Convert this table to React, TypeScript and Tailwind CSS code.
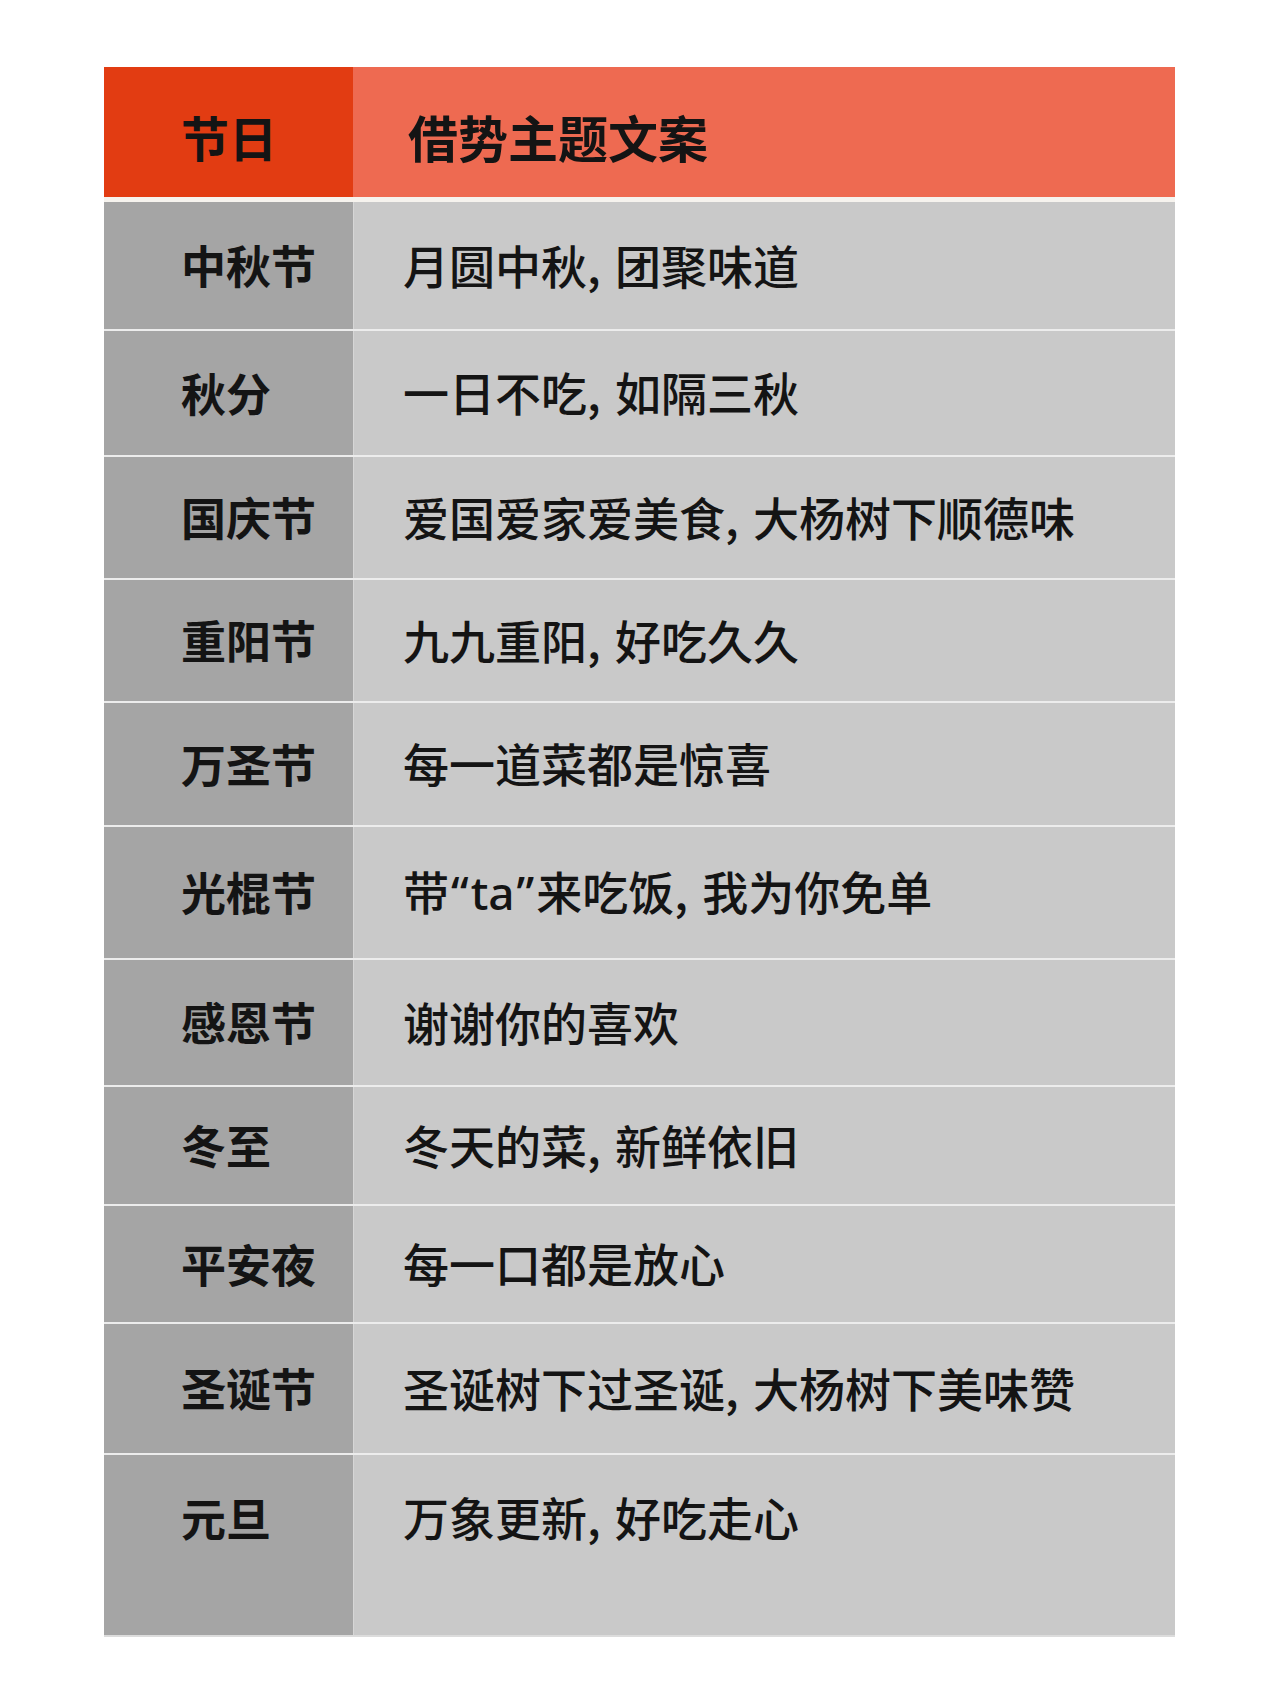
import type { ReactNode } from 'react';

const font = "font-['Noto_Sans_CJK_SC','Noto_Sans',sans-serif]";

function Comma() {
  return <span className="inline-block w-[28px]">,</span>;
}

function Q({ c }: { c: string }) {
  return <span className="font-['Noto_Sans','Noto_Sans_CJK_SC',sans-serif] mx-[2px]">{c}</span>;
}

function withCommas(s: string): ReactNode {
  const parts = s.split('，');
  return parts.map((p, i) => (
    <span key={i}>
      {p}
      {i < parts.length - 1 && <Comma />}
    </span>
  ));
}

const rows: { day: string; text: ReactNode; h: string }[] = [
  { day: '中秋节', text: withCommas('月圆中秋，团聚味道'), h: 'h-[129px]' },
  { day: '秋分', text: withCommas('一日不吃，如隔三秋'), h: 'h-[126px]' },
  { day: '国庆节', text: withCommas('爱国爱家爱美食，大杨树下顺德味'), h: 'h-[123px]' },
  { day: '重阳节', text: withCommas('九九重阳，好吃久久'), h: 'h-[123px]' },
  { day: '万圣节', text: '每一道菜都是惊喜', h: 'h-[124px]' },
  {
    day: '光棍节',
    text: (
      <>
        带<Q c="“" />
        <span className="font-['Noto_Sans','Noto_Sans_CJK_SC',sans-serif]">ta</span>
        <Q c="”" />来吃饭<Comma />我为你免单
      </>
    ),
    h: 'h-[133px]',
  },
  { day: '感恩节', text: '谢谢你的喜欢', h: 'h-[127px]' },
  { day: '冬至', text: withCommas('冬天的菜，新鲜依旧'), h: 'h-[119px]' },
  { day: '平安夜', text: '每一口都是放心', h: 'h-[118px]' },
  { day: '圣诞节', text: withCommas('圣诞树下过圣诞，大杨树下美味赞'), h: 'h-[131px]' },
];

export default function App() {
  return (
    <div className={`min-h-[1706px] w-[1280px] bg-white pt-[67px] ${font} text-[#141414]`}>
      <div className="ml-[104px] w-[1071px]">
        {/* Header */}
        <div className="grid h-[135px] grid-cols-[249px_1fr] border-b-[5px] border-[#f6f3ee]">
          <div className="flex items-center bg-[#e23c12] pl-[77px] pt-[8px] text-[48px] font-bold leading-none">
            节日
          </div>
          <div className="flex items-center bg-[#ee6a51] pl-[55px] pt-[8px] text-[50px] font-bold leading-none">
            借势主题文案
          </div>
        </div>

        {rows.map((r) => (
          <div key={r.day} className={`grid ${r.h} grid-cols-[249px_1fr] border-b-[2px] border-[#ececec]`}>
            <div className="flex items-center bg-[#a5a5a5] pb-[2px] pl-[77px] text-[45px] font-bold leading-none">
              {r.day}
            </div>
            <div className="flex items-center whitespace-nowrap border-l border-[#d6d6d6] bg-[#c9c9c9] pb-[4px] pl-[49px] text-[46px] font-medium leading-none">
              <span>{r.text}</span>
            </div>
          </div>
        ))}

        {/* Last row */}
        <div className="grid h-[182px] grid-cols-[249px_1fr] border-b-[2px] border-[#dcdcdc]">
          <div className="bg-[#a5a5a5] pl-[77px] pt-[40px] text-[45px] font-bold leading-none">
            元旦
          </div>
          <div className="whitespace-nowrap border-l border-[#d6d6d6] bg-[#c9c9c9] pl-[49px] pt-[38px] text-[46px] font-medium leading-none">
            {withCommas('万象更新，好吃走心')}
          </div>
        </div>
      </div>
    </div>
  );
}
